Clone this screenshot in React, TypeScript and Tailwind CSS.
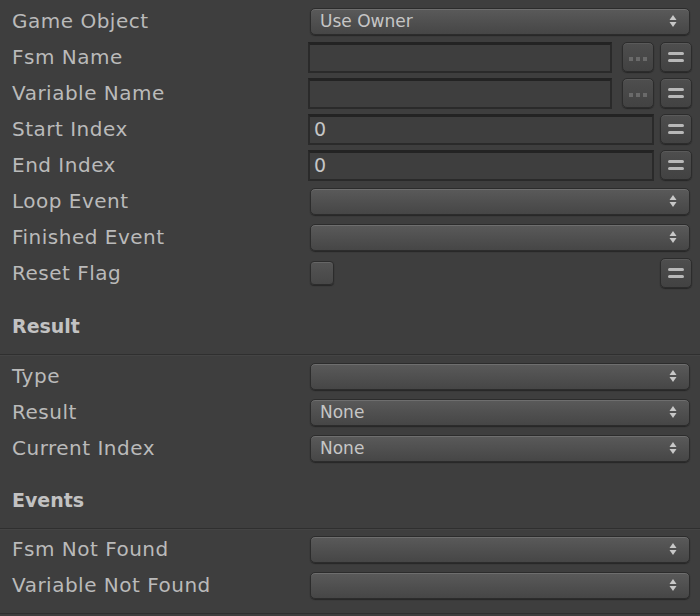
const font = "font-['DejaVu_Sans','Liberation_Sans',sans-serif]";

const Arrows = () => (
  <svg width="8" height="14" viewBox="0 0 8 14" className="text-[#c8c8c8]">
    <path d="M4 1 L7.5 6 H0.5 Z" fill="currentColor" />
    <path d="M4 13 L7.5 8 H0.5 Z" fill="currentColor" />
  </svg>
);

const Popup = ({ value }: { value?: string }) => (
  <div className="flex items-center ml-[2px] mr-[10px] flex-1 h-[27px] rounded-[5px] border border-[#2c2c2c] bg-gradient-to-b from-[#5a5a5a] to-[#464646] shadow-[inset_0_1px_0_#6e6e6e,0_1px_1px_#262626] pl-[9px] pr-[12px]">
    <span className="flex-1 text-[17px] text-[#c6c6c6] leading-none">{value}</span>
    <Arrows />
  </div>
);

const Field = ({ value }: { value?: string }) => (
  <div className="flex items-center flex-1 h-[31px] border-2 border-[#2a2a2a] border-t-[3px] border-t-[#232323] bg-[#3e3e3e] pl-[4px]">
    <span className="text-[19px] text-[#c6c6c6] leading-none">{value}</span>
  </div>
);

const SmallBtn = ({ kind }: { kind: "dots" | "eq" }) => (
  <div className="flex items-center justify-center w-[32px] h-[30px] rounded-[5px] border border-[#2c2c2c] bg-gradient-to-b from-[#4e4e4e] to-[#424242] shadow-[inset_0_1px_0_#5a5a5a,0_1px_1px_#262626]">
    {kind === "dots" ? (
      <div className="flex gap-[3px] mt-[4px]">
        <span className="w-[4px] h-[4px] bg-[#6a6a6a]" />
        <span className="w-[4px] h-[4px] bg-[#6a6a6a]" />
        <span className="w-[4px] h-[4px] bg-[#6a6a6a]" />
      </div>
    ) : (
      <div className="flex flex-col gap-[4px]">
        <span className="w-[16px] h-[3px] rounded-full bg-[#b8b8b8]" />
        <span className="w-[16px] h-[3px] rounded-full bg-[#b8b8b8]" />
      </div>
    )}
  </div>
);

const Row = ({ label, children }: { label: string; children?: React.ReactNode }) => (
  <div className="flex items-center h-[36px]">
    <div className="w-[308px] pl-[12px] text-[20px] tracking-[0.5px] text-[#bababa] leading-none">{label}</div>
    <div className="flex items-center flex-1">{children}</div>
  </div>
);

const Header = ({ title, first }: { title: string; first?: boolean }) => (
  <div className="flex flex-col">
    <div className={`flex items-end pl-[12px] pb-[1px] text-[19px] font-bold text-[#c2c2c2] leading-none ${first ? "h-[46px]" : "h-[45px]"}`}>{title}</div>
    <div className={first ? "h-[17px]" : "h-[17px]"} />
    <div className="h-px bg-[#2f2f2f]" />
    <div className="h-px bg-[#444444]" />
    <div className={first ? "h-[2px]" : "h-px"} />
  </div>
);

export default function App() {
  return (
    <div className={`w-[700px] h-[616px] bg-[#3e3e3e] pt-[3px] overflow-hidden ${font}`}>
      <Row label="Game Object">
        <Popup value="Use Owner" />
      </Row>
      <Row label="Fsm Name">
        <div className="flex items-center flex-1 pr-[8px]">
          <Field />
          <div className="ml-[10px]"><SmallBtn kind="dots" /></div>
          <div className="ml-[6px]"><SmallBtn kind="eq" /></div>
        </div>
      </Row>
      <Row label="Variable Name">
        <div className="flex items-center flex-1 pr-[8px]">
          <Field />
          <div className="ml-[10px]"><SmallBtn kind="dots" /></div>
          <div className="ml-[6px]"><SmallBtn kind="eq" /></div>
        </div>
      </Row>
      <Row label="Start Index">
        <div className="flex items-center flex-1 pr-[8px]">
          <Field value="0" />
          <div className="ml-[6px]"><SmallBtn kind="eq" /></div>
        </div>
      </Row>
      <Row label="End Index">
        <div className="flex items-center flex-1 pr-[8px]">
          <Field value="0" />
          <div className="ml-[6px]"><SmallBtn kind="eq" /></div>
        </div>
      </Row>
      <Row label="Loop Event">
        <Popup />
      </Row>
      <Row label="Finished Event">
        <Popup />
      </Row>
      <Row label="Reset Flag">
        <div className="flex items-center flex-1 pr-[8px] pl-[2px]">
          <div className="w-[24px] h-[24px] rounded-[4px] border border-[#2c2c2c] bg-gradient-to-b from-[#545454] to-[#474747] shadow-[inset_0_1px_0_#666666,0_1px_1px_#262626]" />
          <div className="flex-1" />
          <SmallBtn kind="eq" />
        </div>
      </Row>
      <Header title="Result" first />
      <Row label="Type">
        <Popup />
      </Row>
      <Row label="Result">
        <Popup value="None" />
      </Row>
      <Row label="Current Index">
        <Popup value="None" />
      </Row>
      <Header title="Events" />
      <Row label="Fsm Not Found">
        <Popup />
      </Row>
      <Row label="Variable Not Found">
        <Popup />
      </Row>
      <div className="h-[10px]" />
      <div className="h-px bg-[#2f2f2f]" />
    </div>
  );
}
